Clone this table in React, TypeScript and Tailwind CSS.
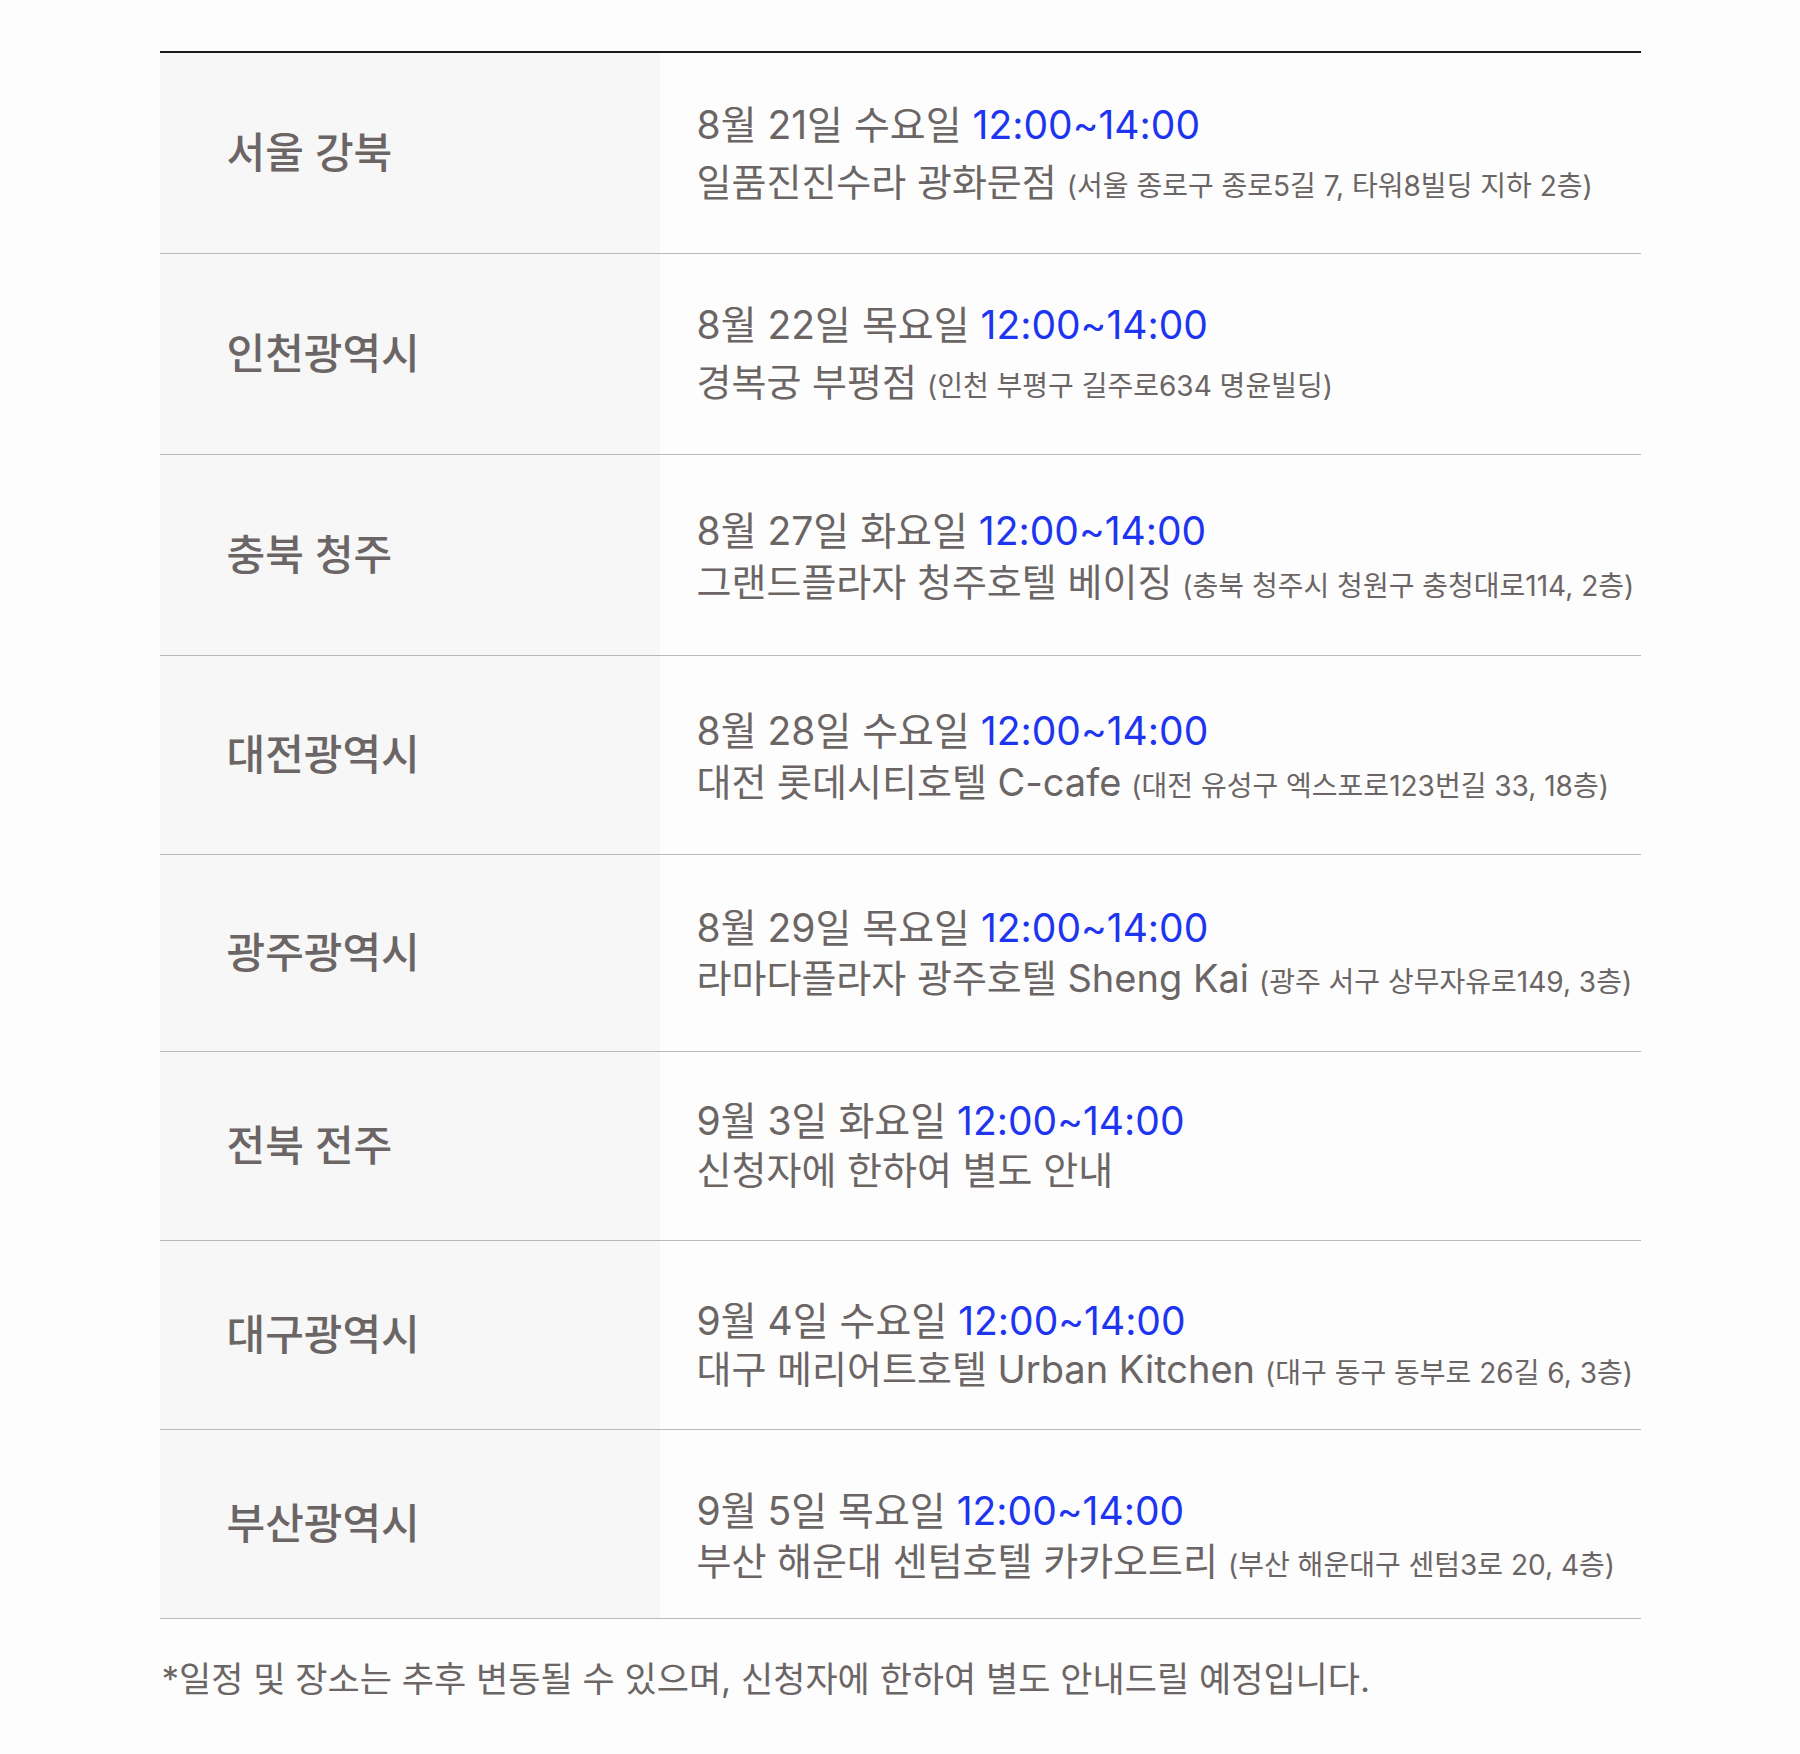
import React from 'react';

type Session = {
  region: string;
  date: string;
  time: string;
  place: string;
  addr?: string;
  rowClass: string;
  padClass: string;
  gapClass: string;
};

const sessions: Session[] = [
  {
    region: '서울 강북',
    date: '8월 21일 수요일',
    time: '12:00~14:00',
    place: '일품진진수라 광화문점',
    addr: '(서울 종로구 종로5길 7, 타워8빌딩 지하 2층)',
    rowClass: 'h-[201px]',
    padClass: 'pt-[48px]',
    gapClass: 'mt-[9px]',
  },
  {
    region: '인천광역시',
    date: '8월 22일 목요일',
    time: '12:00~14:00',
    place: '경복궁 부평점',
    addr: '(인천 부평구 길주로634 명윤빌딩)',
    rowClass: 'h-[201px]',
    padClass: 'pt-[47px]',
    gapClass: 'mt-[9px]',
  },
  {
    region: '충북 청주',
    date: '8월 27일 화요일',
    time: '12:00~14:00',
    place: '그랜드플라자 청주호텔 베이징',
    addr: '(충북 청주시 청원구 충청대로114, 2층)',
    rowClass: 'h-[201px]',
    padClass: 'pt-[52px]',
    gapClass: 'mt-[3px]',
  },
  {
    region: '대전광역시',
    date: '8월 28일 수요일 ',
    time: '12:00~14:00',
    place: '대전 롯데시티호텔 C-cafe',
    addr: '(대전 유성구 엑스포로123번길 33, 18층)',
    rowClass: 'h-[199px]',
    padClass: 'pt-[51px]',
    gapClass: 'mt-[3px]',
  },
  {
    region: '광주광역시',
    date: '8월 29일 목요일 ',
    time: '12:00~14:00',
    place: '라마다플라자 광주호텔 Sheng Kai',
    addr: '(광주 서구 상무자유로149, 3층)',
    rowClass: 'h-[197px]',
    padClass: 'pt-[49px]',
    gapClass: 'mt-[2px]',
  },
  {
    region: '전북 전주',
    date: '9월 3일 화요일',
    time: '12:00~14:00',
    place: '신청자에 한하여 별도 안내',
    rowClass: 'h-[189px]',
    padClass: 'pt-[45px]',
    gapClass: 'mt-[1px]',
  },
  {
    region: '대구광역시',
    date: '9월 4일 수요일',
    time: '12:00~14:00',
    place: '대구 메리어트호텔 Urban Kitchen',
    addr: '(대구 동구 동부로 26길 6, 3층)',
    rowClass: 'h-[189px]',
    padClass: 'pt-[56px]',
    gapClass: 'mt-[0px]',
  },
  {
    region: '부산광역시',
    date: '9월 5일 목요일',
    time: '12:00~14:00',
    place: '부산 해운대 센텀호텔 카카오트리',
    addr: '(부산 해운대구 센텀3로 20, 4층)',
    rowClass: 'h-[189px]',
    padClass: 'pt-[57px]',
    gapClass: 'mt-[2px]',
  },
];

export default function App() {
  return (
    <div className="min-h-[1754px] bg-[#fdfdfd] pt-[51px] font-['Inter','Noto_Sans_CJK_KR',sans-serif] text-[#6b6565]">
      <div className="mx-auto w-[1481px]">
        {/* Schedule table */}
        <div className="border-t-2 border-[#1c1c1c]">
          {sessions.map((s) => (
            <div
              key={s.region}
              className={`flex border-b border-[#b9b9b9] ${s.rowClass}`}
            >
              <div className="flex w-[500px] shrink-0 items-center bg-[#f7f7f7] pl-[67px]">
                <span className="text-[42px] font-medium leading-none">
                  {s.region}
                </span>
              </div>
              <div className={`flex flex-1 flex-col pl-[37px] ${s.padClass}`}>
                <div className="whitespace-nowrap text-[39px] leading-[48px]">
                  {s.date} <span className="text-[#1d34f0]">{s.time}</span>
                </div>
                <div
                  className={`whitespace-nowrap text-[38px] leading-[48px] ${s.gapClass}`}
                >
                  {s.place}
                  {s.addr && (
                    <span className="ml-[10px] text-[28px]">{s.addr}</span>
                  )}
                </div>
              </div>
            </div>
          ))}
        </div>

        {/* Footnote */}
        <p className="mt-[38px] pl-[2px] text-[35px] leading-[44px]">
          *일정 및 장소는 추후 변동될 수 있으며, 신청자에 한하여 별도 안내드릴 예정입니다.
        </p>
      </div>
    </div>
  );
}
